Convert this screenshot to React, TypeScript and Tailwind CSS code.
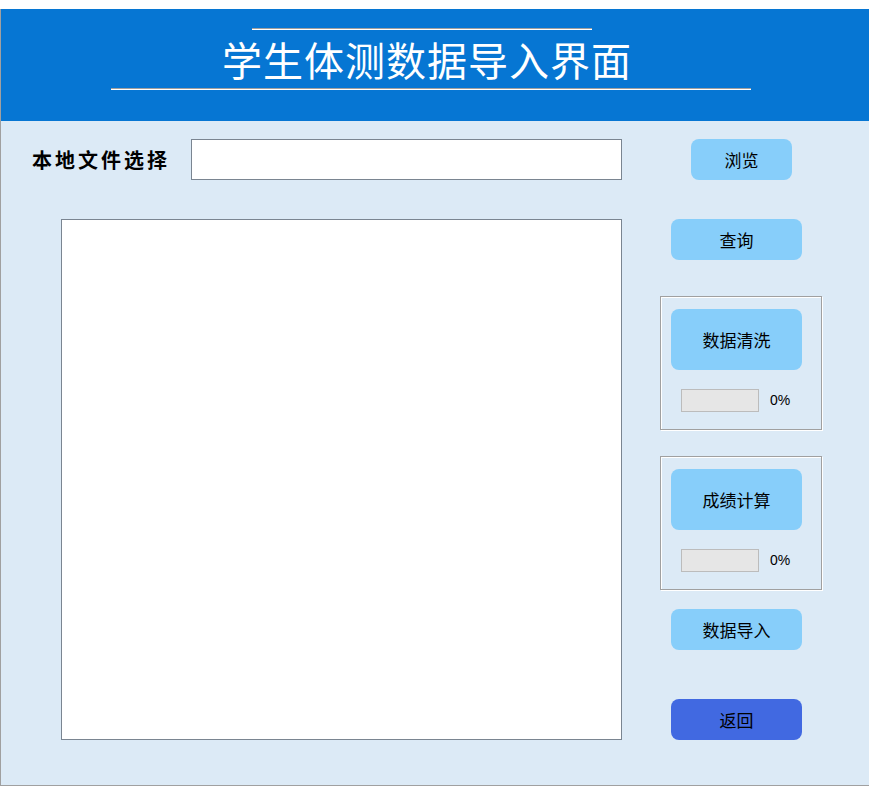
import React from 'react';

const cjk = { fontFamily: '"Noto Sans CJK SC", "Liberation Sans", sans-serif' };

const SkyButton: React.FC<{ label: string; className?: string }> = ({ label, className = '' }) => (
  <button
    className={`flex items-center justify-center rounded-[8px] bg-[#87cefa] text-[17px] leading-none text-black ${className}`}
  >
    {label}
  </button>
);

const ProgressGroup: React.FC<{ label: string; className?: string }> = ({ label, className = '' }) => (
  <div
    className={`w-[162px] h-[134px] border border-[#a0a0a0] shadow-[1px_1px_0_#ffffff,inset_1px_1px_0_#ffffff] pt-[12px] ${className}`}
  >
    <SkyButton label={label} className="ml-[10px] w-[131px] h-[61px]" />
    <div className="flex items-center mt-[19px] ml-[20px]">
      <div className="w-[78px] h-[23px] bg-[#e6e6e6] border border-[#bcbcbc]" />
      <span className="ml-[11px] text-[14px] text-black" style={{ fontFamily: '"Liberation Sans", sans-serif' }}>
        0%
      </span>
    </div>
  </div>
);

const App: React.FC = () => {
  return (
    <div className="w-[869px] h-[786px] bg-white overflow-hidden" style={cjk}>
      <div className="mt-[9px] h-[777px] bg-[#dceaf6] border-l border-b border-[#a0a0a0] flex flex-col">
        {/* Header */}
        <header className="h-[112px] bg-[#0676d3] pt-[19px] flex flex-col items-start">
          <div className="ml-[251px] w-[340px] h-px bg-[#a0a0a0]" />
          <div className="ml-[251px] w-[340px] h-px bg-white" />
          <h1 className="ml-[221px] h-[58px] flex items-center text-[40px] leading-none tracking-[1px] text-white font-normal">
            学生体测数据导入界面
          </h1>
          <div className="ml-[110px] w-[640px] h-px bg-[#a0a0a0]" />
          <div className="ml-[110px] w-[640px] h-px bg-white" />
        </header>

        {/* Body */}
        <main className="flex pt-[18px]">
          {/* Left column */}
          <div className="w-[621px] pl-[31px]">
            <div className="flex items-center">
              <label className="w-[159px] text-[20px] leading-none font-bold tracking-[3px] text-black">本地文件选择</label>
              <input className="w-[431px] h-[41px] bg-white border border-[#7a8591] outline-none" />
            </div>
            <div className="mt-[39px] ml-[29px] w-[561px] h-[521px] bg-white border border-[#7a8591]" />
          </div>

          {/* Right column */}
          <div className="ml-[38px] w-[162px] flex flex-col items-start">
            <SkyButton label="浏览" className="ml-[31px] w-[101px] h-[41px]" />
            <SkyButton label="查询" className="mt-[39px] ml-[11px] w-[131px] h-[41px]" />
            <ProgressGroup label="数据清洗" className="mt-[36px]" />
            <ProgressGroup label="成绩计算" className="mt-[26px]" />
            <SkyButton label="数据导入" className="mt-[19px] ml-[11px] w-[131px] h-[41px]" />
            <button className="mt-[49px] ml-[11px] w-[131px] h-[41px] flex items-center justify-center rounded-[8px] bg-[#4169e1] text-[17px] leading-none text-black">
              返回
            </button>
          </div>
        </main>
      </div>
    </div>
  );
};

export default App;
